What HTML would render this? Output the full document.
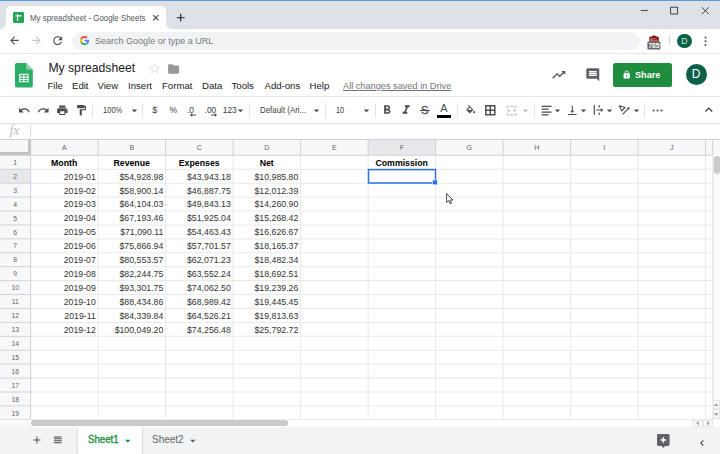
<!DOCTYPE html>
<html><head><meta charset="utf-8"><title>My spreadsheet - Google Sheets</title>
<style>
*{box-sizing:border-box;margin:0;padding:0}
html,body{width:720px;height:454px;overflow:hidden;background:#fff;font-family:"Liberation Sans",Arial,sans-serif;color:#202124}
div,svg{position:absolute}
svg{overflow:visible}
#tabbar{left:0;top:0;width:720px;height:29px;background:#dee1e6;border-top:1.3px solid #5a9bd8}
#tab{left:5.6px;top:6.3px;width:160.4px;height:23px;background:#fff;border-radius:5px 5px 0 0}
#tabtitle{left:29.6px;top:12px;font-size:9.3px;line-height:12px;color:#54575b;white-space:nowrap;transform-origin:0 50%;transform:scaleX(0.85)}
#addr{left:0;top:28.7px;width:720px;height:25px;background:#fff;border-bottom:1px solid #e3e5e8}
#omni{left:72.3px;top:31.6px;width:567.5px;height:18.6px;border-radius:9.3px;background:#f1f3f4}
#omnitext{left:95.2px;top:35px;transform-origin:0 50%;transform:scaleX(0.94);font-size:9.6px;line-height:12px;color:#777b80;white-space:nowrap}
#title{left:48.4px;top:59.7px;font-size:12.2px;line-height:16px;color:#202124;white-space:nowrap}
.menu{top:80px;font-size:9.6px;line-height:12px;color:#202124;white-space:nowrap}
#saved{color:#70757a;text-decoration:underline;transform-origin:0 50%;transform:scaleX(0.958)}
#hdrline{left:0;top:96.3px;width:720px;height:1px;background:#e4e6e9}
#tbline{left:0;top:122.7px;width:720px;height:1px;background:#dcdee1}
.tbt{top:104px;font-size:8.4px;line-height:12px;color:#3c4043;white-space:nowrap}
.sep{top:102.5px;width:1px;height:15px;background:#e2e3e5}
#fxline{left:0;top:139px;width:720px;height:1px;background:#cfd0d2}
#fx{left:9.6px;top:122.6px;font-family:"Liberation Serif",serif;font-style:italic;font-size:13.6px;line-height:15px;color:#bfc1c4}
#fxsep{left:30px;top:125.4px;width:1px;height:11.6px;background:#d5d7da}
#colhdr{left:0;top:140px;width:720px;height:15px;background:#f8f8fa}
.ch{top:140px;height:15px;font-size:7px;line-height:15.5px;text-align:center;color:#5f6368}
.ch.sel,.rh.sel{background:#e8e8ec}
.rh{left:0;width:30.5px;font-size:6.8px;padding-top:0.6px;text-align:center;color:#5f6368;background:#f8f8fa}
.vl{top:140px;width:1px;height:279.5px;background:#e2e3e4}
.hl{left:0;width:712.6px;height:1px;background:#e2e3e4}
.c{height:13.93px;line-height:13.93px;font-size:8.75px;color:#333;white-space:nowrap;padding:1.4px 2.3px 0 2px}
.c.b{font-weight:bold;color:#000}
.c.ctr{text-align:center}
.c.r{text-align:right}
#bottom{left:0;top:427.2px;width:720px;height:27px;background:#f1f3f4}
#sheet1{left:77.5px;top:427.2px;width:64.5px;height:27px;background:#fff;box-shadow:0 0.5px 2px rgba(0,0,0,.25)}
.st{top:434px;font-size:9.4px;line-height:12px;white-space:nowrap}
</style></head><body>
<!-- chrome -->
<div id="tabbar"></div>
<div id="tab"></div>
<svg style="left:0px;top:23.3px" width="6" height="6" viewBox="0 0 6 6"><path d="M0 6 H6 V0 A6 6 0 0 1 0 6z" fill="#fff"/></svg>
<svg style="left:165.6px;top:23.3px" width="6" height="6" viewBox="0 0 6 6"><path d="M6 6 H0 V0 A6 6 0 0 0 6 6z" fill="#fff"/></svg>
<svg style="left:13.2px;top:12px" width="11" height="11" viewBox="0 0 11 11"><rect width="11" height="11" rx="1.3" fill="#23a455"/><path d="M2.4 3.9h6.2M4.6 2v7" stroke="#fff" stroke-width="1.1" fill="none"/></svg>
<div id="tabtitle">My spreadsheet - Google Sheets</div>
<svg style="left:150.7px;top:13.1px" width="9.6" height="9.6" viewBox="0 0 24 24"><path fill="#303336" stroke="#303336" stroke-width="0.8" d="M19 6.41L17.59 5 12 10.59 6.41 5 5 6.41 10.59 12 5 17.59 6.41 19 12 13.41 17.59 19 19 17.59 13.41 12z"/></svg>
<svg style="left:174px;top:10.6px" width="13.4" height="13.4" viewBox="0 0 24 24"><path fill="#202124" d="M19 13h-6v6h-2v-6H5v-2h6V5h2v6h6v2z"/></svg>
<!-- window controls -->
<svg style="left:640px;top:5px" width="70" height="12" viewBox="0 0 70 12"><path d="M0.8 5.5h7" stroke="#333" stroke-width="0.9" fill="none"/><rect x="30.6" y="2.2" width="7" height="6.8" fill="none" stroke="#333" stroke-width="0.9"/><path d="M61.8 2.2l7 7M68.8 2.2l-7 7" stroke="#333" stroke-width="0.9" fill="none"/></svg>
<div id="addr"></div>
<svg style="left:8.2px;top:34.4px" width="12.8" height="12.8" viewBox="0 0 24 24"><path fill="#4a4d51" d="M20 11H7.83l5.59-5.59L12 4l-8 8 8 8 1.41-1.41L7.83 13H20v-2z"/></svg>
<svg style="left:29.7px;top:34.4px" width="12.8" height="12.8" viewBox="0 0 24 24"><path fill="#c0c3c7" d="M12 4l-1.41 1.41L16.17 11H4v2h12.17l-5.58 5.59L12 20l8-8z"/></svg>
<svg style="left:51.3px;top:34.2px" width="13.4" height="13.4" viewBox="0 0 24 24"><path fill="#4a4d51" d="M17.65 6.35C16.2 4.9 14.21 4 12 4c-4.42 0-7.99 3.58-7.99 8s3.57 8 7.99 8c3.73 0 6.84-2.55 7.73-6h-2.08c-.82 2.33-3.04 4-5.65 4-3.31 0-6-2.69-6-6s2.69-6 6-6c1.66 0 3.14.69 4.22 1.78L13 11h7V4l-2.35 2.35z"/></svg>
<div id="omni"></div>
<svg style="left:80px;top:36.4px" width="9.2" height="9.2" viewBox="0 0 48 48"><path fill="#EA4335" d="M24 9.5c3.54 0 6.71 1.22 9.21 3.6l6.85-6.85C35.9 2.38 30.47 0 24 0 14.62 0 6.51 5.38 2.56 13.22l7.98 6.19C12.43 13.72 17.74 9.5 24 9.5z"/><path fill="#4285F4" d="M46.98 24.55c0-1.57-.15-3.09-.38-4.55H24v9.02h12.94c-.58 2.96-2.26 5.48-4.78 7.18l7.73 6c4.51-4.18 7.09-10.36 7.09-17.65z"/><path fill="#FBBC05" d="M10.53 28.59c-.48-1.45-.76-2.99-.76-4.59s.27-3.14.76-4.59l-7.98-6.19C.92 16.46 0 20.12 0 24c0 3.88.92 7.54 2.56 10.78l7.97-6.19z"/><path fill="#34A853" d="M24 48c6.48 0 11.93-2.13 15.89-5.81l-7.73-6c-2.15 1.45-4.92 2.3-8.16 2.3-6.26 0-11.57-4.22-13.47-9.91l-7.98 6.19C6.51 42.62 14.62 48 24 48z"/></svg>
<div id="omnitext">Search Google or type a URL</div>
<!-- extension -->
<svg style="left:647.4px;top:34.1px" width="14" height="16" viewBox="0 0 14 16"><path d="M2.3 3.2 L7 1.2 L11.8 3.2 V7.8 H2.3z" fill="#8a1717"/><rect x="0.4" y="7.6" width="13" height="8" rx="1" fill="#6a6a6a"/><text x="6.9" y="14.2" font-size="6.6" font-weight="bold" fill="#fff" text-anchor="middle" font-family="Liberation Sans,sans-serif">785</text><text x="7" y="7" font-size="3.6" font-weight="bold" fill="#d9a0a0" text-anchor="middle" font-family="Liberation Sans,sans-serif">ACL</text></svg>
<div style="left:669.3px;top:35.3px;width:1px;height:10.2px;background:#d5d7da"></div>
<div style="left:677px;top:33.8px;width:14.6px;height:14.6px;border-radius:50%;background:#0b6048"></div>
<div style="left:677px;top:33.8px;width:14.6px;height:14.6px;line-height:14.9px;text-align:center;color:#d5e4df;font-size:8.6px">D</div>
<svg style="left:704.3px;top:36px" width="3" height="11" viewBox="0 0 3 11"><circle cx="1.5" cy="1.5" r="1" fill="#4a4d51"/><circle cx="1.5" cy="5.2" r="1" fill="#4a4d51"/><circle cx="1.5" cy="8.9" r="1" fill="#4a4d51"/></svg>

<!-- sheets header -->
<svg style="left:15.3px;top:62.8px" width="17.8" height="24.6" viewBox="0 0 37 51"><path d="M3.5 0H23l14 14v33.5a3.5 3.5 0 0 1-3.5 3.5h-30A3.5 3.5 0 0 1 0 47.5v-44A3.5 3.5 0 0 1 3.5 0z" fill="#2bae66"/><path d="M23 0l14 14H26.5A3.5 3.5 0 0 1 23 10.5z" fill="#8ed1b1"/><path d="M8.5 22.5v17.5h20v-17.5zm2.5 2.5h6v3h-6zm8.5 0h6.5v3h-6.5zm-8.5 5.5h6v2.5h-6zm8.5 0h6.5v2.5h-6.5zm-8.5 5h6v2.5h-6zm8.5 0h6.5v2.5h-6.5z" fill="#f1f9f5" fill-rule="evenodd"/></svg>
<div id="title">My spreadsheet</div>
<svg style="left:148.4px;top:61.8px" width="13.2" height="13.2" viewBox="0 0 24 24"><path fill="#e2e3e5" d="M22 9.24l-7.19-.62L12 2 9.19 8.63 2 9.24l5.46 4.73L5.82 21 12 17.27 18.18 21l-1.63-7.03L22 9.24zM12 15.4l-3.76 2.27 1-4.28-3.32-2.88 4.38-.38L12 6.1l1.71 4.04 4.38.38-3.32 2.88 1 4.28L12 15.4z"/></svg>
<svg style="left:166.9px;top:61.6px" width="13.2" height="14" viewBox="0 0 24 24" preserveAspectRatio="none"><path fill="#98989c" d="M10 4H4c-1.1 0-1.99.9-1.99 2L2 18c0 1.1.9 2 2 2h16c1.1 0 2-.9 2-2V8c0-1.1-.9-2-2-2h-8l-2-2z"/></svg>
<div class="menu" style="left:47.5px">File</div>
<div class="menu" style="left:72px">Edit</div>
<div class="menu" style="left:97.5px">View</div>
<div class="menu" style="left:128px">Insert</div>
<div class="menu" style="left:162px">Format</div>
<div class="menu" style="left:202px">Data</div>
<div class="menu" style="left:231.5px">Tools</div>
<div class="menu" style="left:264.5px">Add-ons</div>
<div class="menu" style="left:309.5px">Help</div>
<div class="menu" id="saved" style="left:343px">All changes saved in Drive</div>
<svg style="left:551px;top:67px" width="15.5" height="15.5" viewBox="0 0 24 24"><path fill="#4a4d51" d="M16 6l2.29 2.29-4.88 4.88-4-4L2 16.59 3.41 18l6-6 4 4 6.3-6.29L22 12V6z"/></svg>
<svg style="left:585px;top:67.3px" width="15.6" height="15.6" viewBox="0 0 24 24"><path fill="#5f6368" d="M21.99 4c0-1.1-.89-2-1.99-2H4c-1.1 0-2 .9-2 2v12c0 1.1.9 2 2 2h14l4 4-.01-18zM18 14H6v-2h12v2zm0-3H6V9h12v2zm0-3H6V6h12v2z"/></svg>
<div style="left:613.2px;top:63.2px;width:58.8px;height:23.6px;border-radius:2.6px;background:#1e8e3e"></div>
<svg style="left:621.8px;top:69.6px" width="9.4" height="9.4" viewBox="0 0 24 24"><path fill="#fff" d="M18 8h-1V6c0-2.76-2.24-5-5-5S7 3.24 7 6v2H6c-1.1 0-2 .9-2 2v10c0 1.1.9 2 2 2h12c1.1 0 2-.9 2-2V10c0-1.1-.9-2-2-2zm-6 9c-1.1 0-2-.9-2-2s.9-2 2-2 2 .9 2 2-.9 2-2 2zm3.1-9H8.9V6c0-1.71 1.39-3.1 3.1-3.1 1.71 0 3.1 1.39 3.1 3.1v2z"/></svg>
<div style="left:635.2px;top:69px;font-size:9.6px;line-height:12px;font-weight:bold;color:#fff;transform-origin:0 50%;transform:scaleX(0.95)">Share</div>
<div style="left:685.6px;top:64.2px;width:21.2px;height:21.2px;border-radius:50%;background:#0b6048"></div>
<div style="left:685.6px;top:64.2px;width:21.2px;height:21.2px;line-height:21.6px;text-align:center;color:#fff;font-size:12px">D</div>
<div id="hdrline"></div>

<!-- toolbar -->
<svg style="left:17.60px;top:104.20px" width="12.6" height="12.6" viewBox="0 0 24 24"><path fill="#4a4d51" d="M12.5 8c-2.65 0-5.05.99-6.9 2.6L2 7v9h9l-3.62-3.62c1.39-1.16 3.16-1.88 5.12-1.88 3.54 0 6.55 2.31 7.6 5.5l2.37-.78C21.08 11.03 17.15 8 12.5 8z"/></svg>
<svg style="left:36.70px;top:104.20px" width="12.6" height="12.6" viewBox="0 0 24 24"><path fill="#4a4d51" d="M18.4 10.6C16.55 8.99 14.15 8 11.5 8c-4.65 0-8.58 3.03-9.96 7.22L3.9 16c1.05-3.19 4.05-5.5 7.6-5.5 1.95 0 3.73.72 5.12 1.88L13 16h9V7l-3.6 3.6z"/></svg>
<svg style="left:55.70px;top:104.20px" width="12.6" height="12.6" viewBox="0 0 24 24"><path fill="#4a4d51" d="M19 8H5c-1.66 0-3 1.34-3 3v6h4v4h12v-4h4v-6c0-1.66-1.34-3-3-3zm-3 11H8v-5h8v5zm3-7c-.55 0-1-.45-1-1s.45-1 1-1 1 .45 1 1-.45 1-1 1zm-1-9H6v4h12V3z"/></svg>
<svg style="left:74.70px;top:104.20px" width="12.6" height="12.6" viewBox="0 0 24 24"><path fill="#4a4d51" d="M18 4V3c0-.55-.45-1-1-1H5c-.55 0-1 .45-1 1v4c0 .55.45 1 1 1h12c.55 0 1-.45 1-1V6h1v4H9v11c0 .55.45 1 1 1h2c.55 0 1-.45 1-1v-9h8V4h-3z"/></svg>
<div class="sep" style="left:92.30px"></div>
<div class="tbt" style="left:103.3px;transform-origin:0 50%;transform:scaleX(0.9)">100%</div>
<svg style="left:127.50px;top:104.10px" width="13" height="13" viewBox="0 0 24 24"><path fill="#4a4d51" d="M7 10l5 5 5-5z"/></svg>
<div class="sep" style="left:142.30px"></div>
<div class="tbt" style="left:152.2px;font-size:9px">$</div>
<div class="tbt" style="left:169.4px;font-size:8.6px">%</div>
<div class="tbt" style="left:187px;">.0</div>
<div class="tbt" style="left:204.6px;">.00</div>
<div class="tbt" style="left:222.8px;">123</div>
<svg style="left:233.50px;top:104.10px" width="13" height="13" viewBox="0 0 24 24"><path fill="#4a4d51" d="M7 10l5 5 5-5z"/></svg>
<svg style="left:190.3px;top:113px" width="6" height="4" viewBox="0 0 6 4"><path d="M0 2L2.2 0V1.5H6V2.5H2.2V4z" fill="#4a4d51"/></svg>
<svg style="left:210.6px;top:113px" width="6" height="4" viewBox="0 0 6 4"><path d="M6 2L3.8 0V1.5H0V2.5H3.8V4z" fill="#4a4d51"/></svg>
<div class="sep" style="left:248.70px"></div>
<div class="tbt" style="left:260.3px;transform-origin:0 50%;transform:scaleX(0.945)">Default (Ari...</div>
<svg style="left:309.70px;top:104.10px" width="13" height="13" viewBox="0 0 24 24"><path fill="#4a4d51" d="M7 10l5 5 5-5z"/></svg>
<div class="sep" style="left:325.00px"></div>
<div class="tbt" style="left:335.8px;transform-origin:0 50%;transform:scaleX(0.88)">10</div>
<svg style="left:360.20px;top:104.10px" width="13" height="13" viewBox="0 0 24 24"><path fill="#4a4d51" d="M7 10l5 5 5-5z"/></svg>
<div class="sep" style="left:374.50px"></div>
<svg style="left:380.00px;top:103.20px" width="14.2" height="14.2" viewBox="0 0 24 24"><path fill="#4a4d51" d="M15.6 10.79c.97-.67 1.65-1.77 1.65-2.79 0-2.26-1.75-4-4-4H7v14h7.04c2.09 0 3.71-1.7 3.71-3.79 0-1.52-.86-2.82-2.15-3.42zM10 6.5h3c.83 0 1.5.67 1.5 1.5s-.67 1.5-1.5 1.5h-3v-3zm3.5 9H10v-3h3.5c.83 0 1.5.67 1.5 1.5s-.67 1.5-1.5 1.5z"/></svg>
<svg style="left:399.30px;top:103.20px" width="14.2" height="14.2" viewBox="0 0 24 24"><path fill="#4a4d51" d="M10 4v3h2.21l-3.42 8H6v3h8v-3h-2.21l3.42-8H18V4z"/></svg>
<div class="tbt" style="left:420.9px;top:104.4px;font-size:11.4px;-webkit-text-stroke:0.3px #4a4d51;color:#4a4d51">S</div><div style="left:419.8px;top:110px;width:10px;height:1.1px;background:#4a4d51"></div>
<div class="tbt" style="left:440.2px;top:102.2px;font-size:10.8px;color:#4a4d51">A</div><div style="left:437px;top:115.2px;width:14px;height:2.7px;background:#000"></div>
<div class="sep" style="left:456.80px"></div>
<svg style="left:464.85px;top:105.05px" width="11.5" height="11.5" viewBox="0 0 24 24"><path fill="#4a4d51" d="M16.56 8.94L7.62 0 6.21 1.41l2.38 2.38-5.15 5.15c-.59.59-.59 1.54 0 2.12l5.5 5.5c.29.29.68.44 1.06.44s.77-.15 1.06-.44l5.5-5.5c.59-.58.59-1.53 0-2.12zM5.21 10L10 5.21 14.79 10H5.21zM19 11.5s-2 2.17-2 3.5c0 1.1.9 2 2 2s2-.9 2-2c0-1.33-2-3.5-2-3.5z"/></svg>
<svg style="left:485.3px;top:105.2px" width="10.6" height="10.6" viewBox="0 0 10.6 10.6"><path d="M0.8 0.8h9v9h-9zM5.3 0.8v9M0.8 5.3h9" fill="none" stroke="#4a4d51" stroke-width="1.5"/></svg>
<svg style="left:504.50px;top:103.70px" width="13" height="13" viewBox="0 0 24 24"><path d="M3 3h4v2H5v2H3zM9 3h6v2H9zM17 3h4v4h-2V5h-2zM3 17h2v2h2v2H3zM9 19h6v2H9zM17 19h2v-2h2v4h-4zM3 11h3V9l3 3-3 3v-2H3zM21 11h-3V9l-3 3 3 3v-2h3z" fill="#bcbec1"/></svg>
<svg style="left:518.80px;top:104.10px" width="13" height="13" viewBox="0 0 24 24"><path fill="#bcbec1" d="M7 10l5 5 5-5z"/></svg>
<div class="sep" style="left:533.90px"></div>
<svg style="left:539.50px;top:103.80px" width="12.6" height="12.6" viewBox="0 0 24 24"><path d="M3 3.4h19v2.3H3zM3 8.8h13.5v2.3H3zM3 14.2h19v2.3H3zM3 19.6h13.5v2.3H3z" fill="#4a4d51"/></svg>
<svg style="left:551.00px;top:104.10px" width="13" height="13" viewBox="0 0 24 24"><path fill="#4a4d51" d="M7 10l5 5 5-5z"/></svg>
<svg style="left:565.70px;top:103.60px" width="12.6" height="12.6" viewBox="0 0 24 24"><path fill="#4a4d51" d="M16 13h-3V3h-2v10H8l4 4 4-4zM4 19v2h16v-2H4z"/></svg>
<svg style="left:577.40px;top:104.10px" width="13" height="13" viewBox="0 0 24 24"><path fill="#4a4d51" d="M7 10l5 5 5-5z"/></svg>
<svg style="left:593px;top:104px" width="12" height="12" viewBox="0 0 12 12"><path d="M0.7 1h1.2v9.8H0.7zM3.3 5.45h4.5v-1.5l2.5 2.05-2.5 2.05v-1.5H3.3zM5.7 1.1h1.1v2.4H5.7zM5.7 8.5h1.1v2.4H5.7z" fill="#4a4d51"/></svg>
<svg style="left:603.10px;top:104.10px" width="13" height="13" viewBox="0 0 24 24"><path fill="#4a4d51" d="M7 10l5 5 5-5z"/></svg>
<svg style="left:618px;top:104px" width="13" height="12" viewBox="0 0 13 12"><path d="M1.3 1.7L7 3.5L3.8 6.9z" fill="none" stroke="#4a4d51" stroke-width="1.1" stroke-linejoin="round"/><path d="M4.6 10.3L10.2 4.7" stroke="#4a4d51" stroke-width="1.2" fill="none"/><path d="M11.6 3.2L11.2 6.1L8.7 3.6z" fill="#4a4d51"/></svg>
<svg style="left:629.60px;top:104.10px" width="13" height="13" viewBox="0 0 24 24"><path fill="#4a4d51" d="M7 10l5 5 5-5z"/></svg>
<div class="sep" style="left:643.90px"></div>
<svg style="left:651.5px;top:108.7px" width="11" height="3" viewBox="0 0 11 3"><circle cx="1.5" cy="1.5" r="1.05" fill="#4a4d51"/><circle cx="5.5" cy="1.5" r="1.05" fill="#4a4d51"/><circle cx="9.5" cy="1.5" r="1.05" fill="#4a4d51"/></svg>
<svg style="left:700.50px;top:102.00px" width="15.6" height="15.6" viewBox="0 0 24 24"><path fill="#3c4043" d="M12 8l-6 6 1.41 1.41L12 10.83l4.59 4.58L18 14z"/></svg>
<div id="tbline"></div>
<div id="fx">fx</div>
<div id="fxsep"></div>
<div id="fxline"></div>
<div id="colhdr"></div>
<svg style="left:0;top:0" width="720" height="454" viewBox="0 0 720 454"><path d="M0 153.6H29.6V139.6" fill="none" stroke="#c1c1c5" stroke-width="3"/></svg>
<div class="ch" style="left:30.60px;width:67.50px">A</div>
<div class="ch" style="left:98.10px;width:67.50px">B</div>
<div class="ch" style="left:165.60px;width:67.50px">C</div>
<div class="ch" style="left:233.10px;width:67.50px">D</div>
<div class="ch" style="left:300.60px;width:67.50px">E</div>
<div class="ch sel" style="left:368.10px;width:67.50px">F</div>
<div class="ch" style="left:435.60px;width:67.50px">G</div>
<div class="ch" style="left:503.10px;width:67.50px">H</div>
<div class="ch" style="left:570.60px;width:67.50px">I</div>
<div class="ch" style="left:638.10px;width:67.50px">J</div>
<div class="rh" style="top:155.30px;height:13.93px;line-height:13.93px">1</div>
<div class="rh sel" style="top:169.23px;height:13.93px;line-height:13.93px">2</div>
<div class="rh" style="top:183.15px;height:13.93px;line-height:13.93px">3</div>
<div class="rh" style="top:197.08px;height:13.93px;line-height:13.93px">4</div>
<div class="rh" style="top:211.00px;height:13.93px;line-height:13.93px">5</div>
<div class="rh" style="top:224.93px;height:13.93px;line-height:13.93px">6</div>
<div class="rh" style="top:238.85px;height:13.93px;line-height:13.93px">7</div>
<div class="rh" style="top:252.78px;height:13.93px;line-height:13.93px">8</div>
<div class="rh" style="top:266.70px;height:13.93px;line-height:13.93px">9</div>
<div class="rh" style="top:280.62px;height:13.93px;line-height:13.93px">10</div>
<div class="rh" style="top:294.55px;height:13.93px;line-height:13.93px">11</div>
<div class="rh" style="top:308.48px;height:13.93px;line-height:13.93px">12</div>
<div class="rh" style="top:322.40px;height:13.93px;line-height:13.93px">13</div>
<div class="rh" style="top:336.33px;height:13.93px;line-height:13.93px">14</div>
<div class="rh" style="top:350.25px;height:13.93px;line-height:13.93px">15</div>
<div class="rh" style="top:364.18px;height:13.93px;line-height:13.93px">16</div>
<div class="rh" style="top:378.10px;height:13.93px;line-height:13.93px">17</div>
<div class="rh" style="top:392.03px;height:13.93px;line-height:13.93px">18</div>
<div class="rh" style="top:405.95px;height:13.93px;line-height:13.93px">19</div>
<svg style="left:0;top:0" width="720" height="454" viewBox="0 0 720 454"><g stroke="#eae9ee" stroke-width="1.05" fill="none"><path d="M30.60 155.30V419.88"/><path d="M98.10 155.30V419.88"/><path d="M165.60 155.30V419.88"/><path d="M233.10 155.30V419.88"/><path d="M300.60 155.30V419.88"/><path d="M368.10 155.30V419.88"/><path d="M435.60 155.30V419.88"/><path d="M503.10 155.30V419.88"/><path d="M570.60 155.30V419.88"/><path d="M638.10 155.30V419.88"/><path d="M705.60 155.30V419.88"/><path d="M712.6 155.30V419.88"/><path d="M30.60 169.23H712.6"/><path d="M30.60 183.15H712.6"/><path d="M30.60 197.08H712.6"/><path d="M30.60 211.00H712.6"/><path d="M30.60 224.93H712.6"/><path d="M30.60 238.85H712.6"/><path d="M30.60 252.78H712.6"/><path d="M30.60 266.70H712.6"/><path d="M30.60 280.62H712.6"/><path d="M30.60 294.55H712.6"/><path d="M30.60 308.48H712.6"/><path d="M30.60 322.40H712.6"/><path d="M30.60 336.33H712.6"/><path d="M30.60 350.25H712.6"/><path d="M30.60 364.18H712.6"/><path d="M30.60 378.10H712.6"/><path d="M30.60 392.03H712.6"/><path d="M30.60 405.95H712.6"/><path d="M30.60 419.88H712.6"/></g><g stroke="#d2d2d7" stroke-width="1" fill="none"><path d="M30.60 140V155.30"/><path d="M98.10 140V155.30"/><path d="M165.60 140V155.30"/><path d="M233.10 140V155.30"/><path d="M300.60 140V155.30"/><path d="M368.10 140V155.30"/><path d="M435.60 140V155.30"/><path d="M503.10 140V155.30"/><path d="M570.60 140V155.30"/><path d="M638.10 140V155.30"/><path d="M705.60 140V155.30"/><path d="M712.6 140V155.30"/><path d="M0 155.30H712.6"/><path d="M0 155.30H30.60"/><path d="M0 169.23H30.60"/><path d="M0 183.15H30.60"/><path d="M0 197.08H30.60"/><path d="M0 211.00H30.60"/><path d="M0 224.93H30.60"/><path d="M0 238.85H30.60"/><path d="M0 252.78H30.60"/><path d="M0 266.70H30.60"/><path d="M0 280.62H30.60"/><path d="M0 294.55H30.60"/><path d="M0 308.48H30.60"/><path d="M0 322.40H30.60"/><path d="M0 336.33H30.60"/><path d="M0 350.25H30.60"/><path d="M0 364.18H30.60"/><path d="M0 378.10H30.60"/><path d="M0 392.03H30.60"/><path d="M0 405.95H30.60"/><path d="M0 419.88H30.60"/><path d="M30.60 155.30V419.88"/></g></svg>
<div class="c b ctr" style="left:30.60px;top:155.30px;width:67.50px">Month</div>
<div class="c b ctr" style="left:98.10px;top:155.30px;width:67.50px">Revenue</div>
<div class="c b ctr" style="left:165.60px;top:155.30px;width:67.50px">Expenses</div>
<div class="c b ctr" style="left:233.10px;top:155.30px;width:67.50px">Net</div>
<div class="c b ctr" style="left:368.10px;top:155.30px;width:67.50px">Commission</div>
<div class="c r" style="left:30.60px;top:169.23px;width:67.50px">2019-01</div>
<div class="c r" style="left:98.10px;top:169.23px;width:67.50px">$54,928.98</div>
<div class="c r" style="left:165.60px;top:169.23px;width:67.50px">$43,943.18</div>
<div class="c r" style="left:233.10px;top:169.23px;width:67.50px">$10,985.80</div>
<div class="c r" style="left:30.60px;top:183.15px;width:67.50px">2019-02</div>
<div class="c r" style="left:98.10px;top:183.15px;width:67.50px">$58,900.14</div>
<div class="c r" style="left:165.60px;top:183.15px;width:67.50px">$46,887.75</div>
<div class="c r" style="left:233.10px;top:183.15px;width:67.50px">$12,012.39</div>
<div class="c r" style="left:30.60px;top:197.08px;width:67.50px">2019-03</div>
<div class="c r" style="left:98.10px;top:197.08px;width:67.50px">$64,104.03</div>
<div class="c r" style="left:165.60px;top:197.08px;width:67.50px">$49,843.13</div>
<div class="c r" style="left:233.10px;top:197.08px;width:67.50px">$14,260.90</div>
<div class="c r" style="left:30.60px;top:211.00px;width:67.50px">2019-04</div>
<div class="c r" style="left:98.10px;top:211.00px;width:67.50px">$67,193.46</div>
<div class="c r" style="left:165.60px;top:211.00px;width:67.50px">$51,925.04</div>
<div class="c r" style="left:233.10px;top:211.00px;width:67.50px">$15,268.42</div>
<div class="c r" style="left:30.60px;top:224.93px;width:67.50px">2019-05</div>
<div class="c r" style="left:98.10px;top:224.93px;width:67.50px">$71,090.11</div>
<div class="c r" style="left:165.60px;top:224.93px;width:67.50px">$54,463.43</div>
<div class="c r" style="left:233.10px;top:224.93px;width:67.50px">$16,626.67</div>
<div class="c r" style="left:30.60px;top:238.85px;width:67.50px">2019-06</div>
<div class="c r" style="left:98.10px;top:238.85px;width:67.50px">$75,866.94</div>
<div class="c r" style="left:165.60px;top:238.85px;width:67.50px">$57,701.57</div>
<div class="c r" style="left:233.10px;top:238.85px;width:67.50px">$18,165.37</div>
<div class="c r" style="left:30.60px;top:252.78px;width:67.50px">2019-07</div>
<div class="c r" style="left:98.10px;top:252.78px;width:67.50px">$80,553.57</div>
<div class="c r" style="left:165.60px;top:252.78px;width:67.50px">$62,071.23</div>
<div class="c r" style="left:233.10px;top:252.78px;width:67.50px">$18,482.34</div>
<div class="c r" style="left:30.60px;top:266.70px;width:67.50px">2019-08</div>
<div class="c r" style="left:98.10px;top:266.70px;width:67.50px">$82,244.75</div>
<div class="c r" style="left:165.60px;top:266.70px;width:67.50px">$63,552.24</div>
<div class="c r" style="left:233.10px;top:266.70px;width:67.50px">$18,692.51</div>
<div class="c r" style="left:30.60px;top:280.62px;width:67.50px">2019-09</div>
<div class="c r" style="left:98.10px;top:280.62px;width:67.50px">$93,301.75</div>
<div class="c r" style="left:165.60px;top:280.62px;width:67.50px">$74,062.50</div>
<div class="c r" style="left:233.10px;top:280.62px;width:67.50px">$19,239.26</div>
<div class="c r" style="left:30.60px;top:294.55px;width:67.50px">2019-10</div>
<div class="c r" style="left:98.10px;top:294.55px;width:67.50px">$88,434.86</div>
<div class="c r" style="left:165.60px;top:294.55px;width:67.50px">$68,989.42</div>
<div class="c r" style="left:233.10px;top:294.55px;width:67.50px">$19,445.45</div>
<div class="c r" style="left:30.60px;top:308.48px;width:67.50px">2019-11</div>
<div class="c r" style="left:98.10px;top:308.48px;width:67.50px">$84,339.84</div>
<div class="c r" style="left:165.60px;top:308.48px;width:67.50px">$64,526.21</div>
<div class="c r" style="left:233.10px;top:308.48px;width:67.50px">$19,813.63</div>
<div class="c r" style="left:30.60px;top:322.40px;width:67.50px">2019-12</div>
<div class="c r" style="left:98.10px;top:322.40px;width:67.50px">$100,049.20</div>
<div class="c r" style="left:165.60px;top:322.40px;width:67.50px">$74,256.48</div>
<div class="c r" style="left:233.10px;top:322.40px;width:67.50px">$25,792.72</div>
<!-- selection -->
<svg style="left:0;top:0" width="720" height="454" viewBox="0 0 720 454"><rect x="368.5" y="169.6" width="67" height="13.4" fill="none" stroke="#2b73e0" stroke-width="1.5"/><rect x="432.6" y="180" width="4.8" height="4.8" fill="#2b73e0" stroke="#fff" stroke-width="0.5"/></svg>

<!-- cursor -->
<svg style="left:446.3px;top:192.6px" width="8" height="12" viewBox="0 0 8 12"><path d="M0.6 0.6V9.4L2.7 7.5L4.2 10.8L5.5 10.2L4.1 7H6.9z" fill="#fff" stroke="#222" stroke-width="0.8" stroke-linejoin="round"/></svg>
<!-- scrollbars -->
<div style="left:712.6px;top:155.5px;width:7.4px;height:264px;background:#fafafa;border-left:1px solid #e6e6e6"></div>
<div style="left:714.4px;top:156px;width:6px;height:18px;border-radius:3px;background:#c9cacc"></div>
<div style="left:712.6px;top:399.7px;width:7.4px;height:9.7px;background:#f8f9fa;border:1px solid #e6e6e8"></div>
<div style="left:712.6px;top:409.4px;width:7.4px;height:10px;background:#f8f9fa;border:1px solid #e6e6e8"></div>
<svg style="left:714.2px;top:402.8px" width="4.6" height="3.4" viewBox="0 0 10 6"><path d="M0 6L5 0L10 6z" fill="#9a9da1"/></svg>
<svg style="left:714.2px;top:412.8px" width="4.6" height="3.4" viewBox="0 0 10 6"><path d="M0 0L5 6L10 0z" fill="#9a9da1"/></svg>
<div style="left:0;top:419.5px;width:720px;height:8px;background:#fff"></div>
<div style="left:0;top:419.5px;width:30.5px;height:8px;background:#f8f9fa"></div>
<div style="left:31px;top:420.3px;width:257px;height:5.6px;border-radius:2.8px;background:#c9cacc"></div>
<div style="left:692.3px;top:419.8px;width:10.6px;height:7.4px;background:#f8f9fa;border:1px solid #e6e6e8"></div>
<div style="left:702.9px;top:419.8px;width:10.6px;height:7.4px;background:#f8f9fa;border:1px solid #e6e6e8"></div>
<svg style="left:696px;top:421.4px" width="3" height="4.4" viewBox="0 0 6 10"><path d="M6 0L0 5L6 10z" fill="#9a9da1"/></svg>
<svg style="left:707px;top:421.4px" width="3" height="4.4" viewBox="0 0 6 10"><path d="M0 0L6 5L0 10z" fill="#9a9da1"/></svg>
<!-- bottom bar -->
<div id="bottom"></div>
<div id="sheet1"></div>
<svg style="left:31.2px;top:434.2px" width="12" height="12" viewBox="0 0 24 24"><path fill="#4a4d51" d="M19 13h-6v6h-2v-6H5v-2h6V5h2v6h6v2z"/></svg>
<svg style="left:52.2px;top:434.3px" width="11.6" height="11.6" viewBox="0 0 24 24"><path fill="#4a4d51" d="M4 15h16v-2H4v2zm0 4h16v-2H4v2zm0-8h16V9H4v2zm0-6v2h16V5H4z"/></svg>
<div class="st" style="left:88.4px;color:#1e8e3e;font-size:10.2px;-webkit-text-stroke:0.35px #1e8e3e;transform-origin:0 50%;transform:scaleX(0.95)">Sheet1</div>
<svg style="left:121.2px;top:433.6px" width="13.6" height="13.6" viewBox="0 0 24 24"><path fill="#1e8e3e" d="M7 10l5 5 5-5z"/></svg>
<div class="st" style="left:152.4px;color:#5f6368;font-size:10.1px;transform-origin:0 50%;transform:scaleX(0.985)">Sheet2</div>
<svg style="left:186px;top:433.6px" width="13.6" height="13.6" viewBox="0 0 24 24"><path fill="#5f6368" d="M7 10l5 5 5-5z"/></svg>
<svg style="left:657px;top:433.5px" width="12.6" height="14" viewBox="0 0 18 20"><path d="M2 0h14a2 2 0 0 1 2 2v13a2 2 0 0 1-2 2h-4.5L9 20l-2.5-3H2a2 2 0 0 1-2-2V2a2 2 0 0 1 2-2z" fill="#5f6368"/><path d="M9 3.5l1.5 3.5 3.5 1.5-3.5 1.5L9 13.5 7.5 10 4 8.5 7.5 7z" fill="#fff"/></svg>
<svg style="left:696px;top:436.5px" width="12" height="12" viewBox="0 0 24 24"><path fill="#3c4043" d="M15.41 7.41L14 6l-6 6 6 6 1.41-1.41L10.83 12z"/></svg>
</body></html>
